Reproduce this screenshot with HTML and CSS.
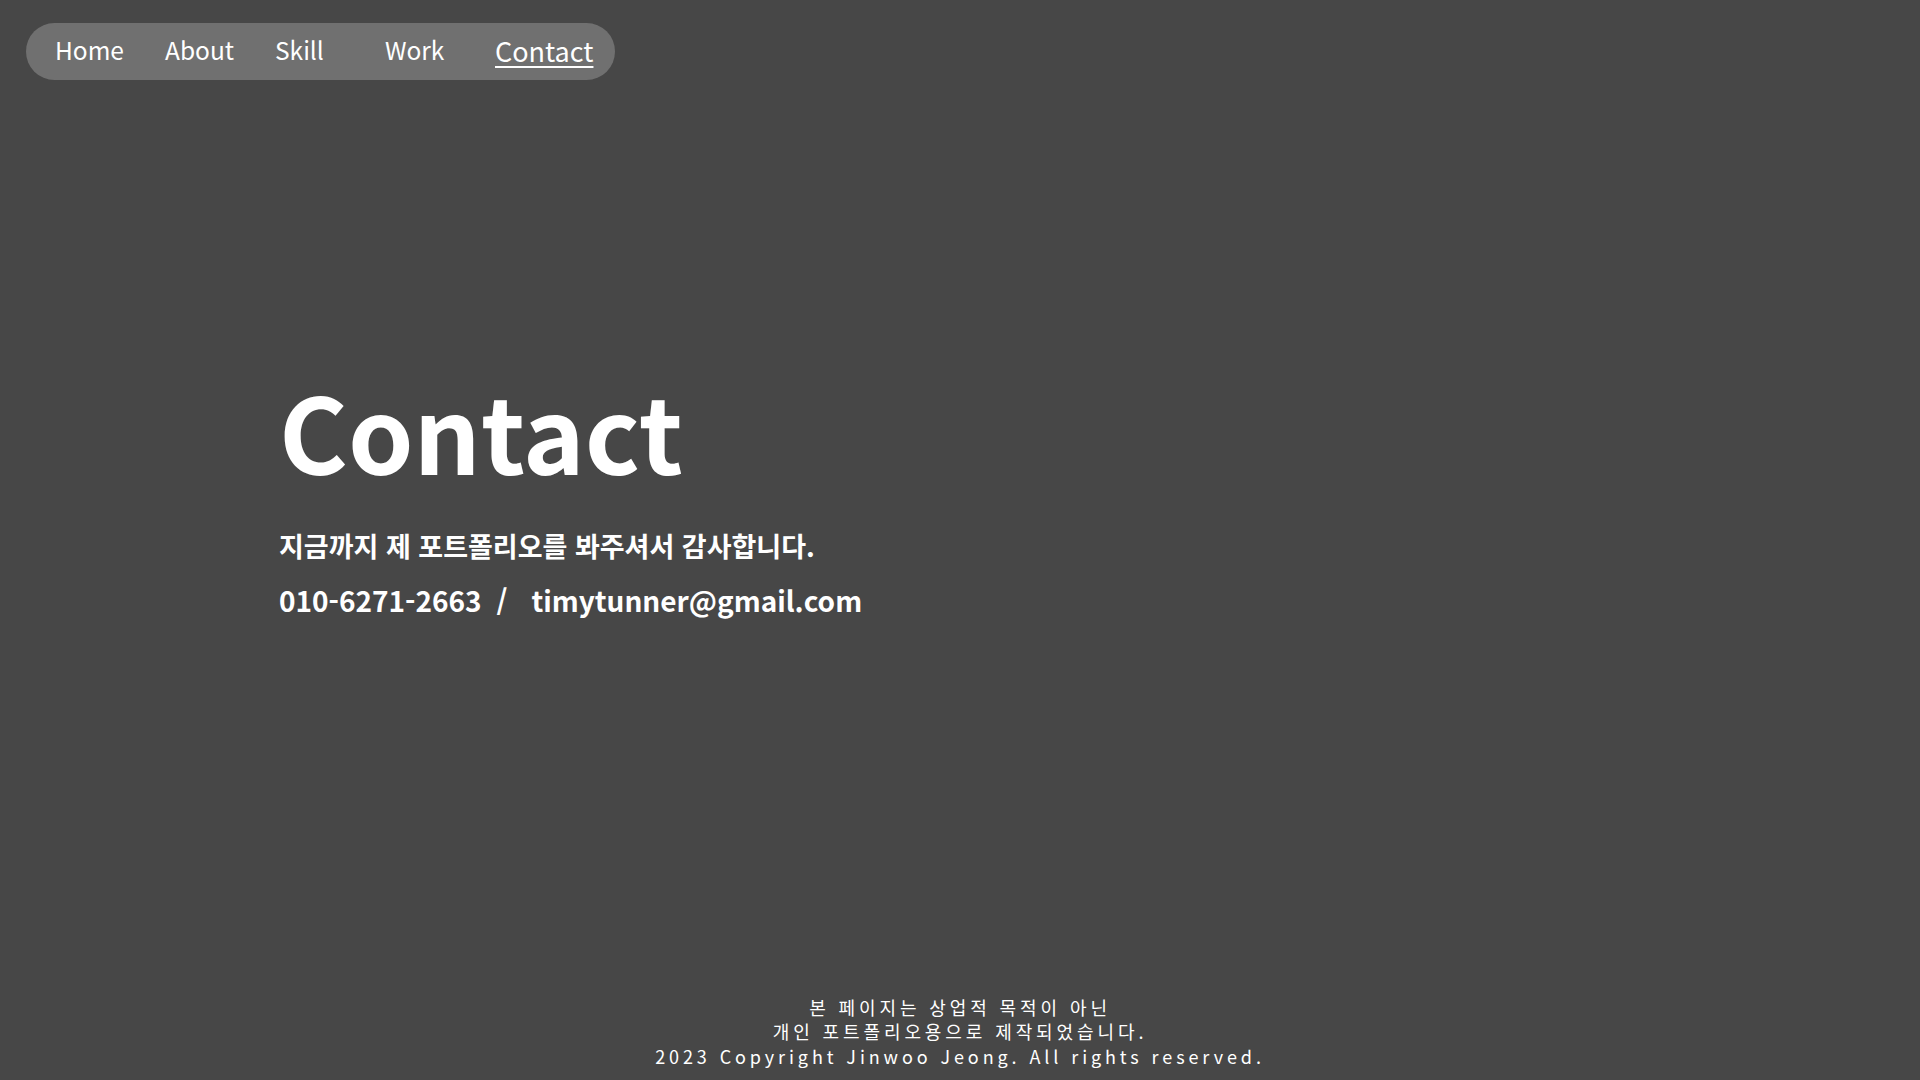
FILE: index.html
```html
<!DOCTYPE html>
<html lang="ko">
<head>
<meta charset="utf-8">
<title>Contact</title>
<link rel="stylesheet" href="styles.css">
</head>
<body>
<div class="page">
  <header class="header">
    <nav class="nav">
      <a class="nav-item" href="#">Home</a>
      <a class="nav-item" href="#">About</a>
      <a class="nav-item" href="#">Skill</a>
      <a class="nav-item" href="#">Work</a>
      <a class="nav-item nav-active" href="#">Contact</a>
    </nav>
  </header>
  <main class="main">
    <h1 class="title">Contact</h1>
    <p class="thanks">지금까지 제 포트폴리오를 봐주셔서 감사합니다.</p>
    <p class="info"><span>010-6271-2663</span><span class="sep">/</span><span>timytunner@gmail.com</span></p>
  </main>
  <footer class="footer">
    <p>본 페이지는 상업적 목적이 아닌</p>
    <p>개인 포트폴리오용으로 제작되었습니다.</p>
    <p>2023 Copyright Jinwoo Jeong. All rights reserved.</p>
  </footer>
</div>
</body>
</html>
```
FILE: styles.css
```css
* { box-sizing: border-box; }
html, body { margin: 0; padding: 0; }
body {
  background: #474747;
  color: #ffffff;
  font-family: "Noto Sans CJK KR", "Noto Sans", sans-serif;
}
.page {
  min-height: 100vh;
  display: flex;
  flex-direction: column;
}
.header {
  padding: 23px 0 0 26px;
}
.nav {
  display: inline-flex;
  align-items: center;
  height: 57px;
  padding: 0 22px 2px 29px;
  background: #707070;
  border-radius: 29px;
}
.nav-item {
  width: 110px;
  color: #ffffff;
  text-decoration: none;
  font-size: 24.5px;
  line-height: 1;
}
.nav-active {
  width: auto;
  font-size: 27px;
  text-decoration: underline;
  text-underline-offset: 4px;
  text-decoration-thickness: 2px;
}
.main {
  flex: 1;
  padding: 297px 0 0 279px;
}
.title {
  margin: 0;
  font-size: 105px;
  font-weight: 700;
  line-height: 1;
}
.thanks {
  margin: 48px 0 0;
  font-size: 27px;
  font-weight: 700;
  line-height: 1.2;
}
.info {
  margin: 22px 0 0;
  font-size: 28px;
  font-weight: 700;
  line-height: 1.2;
}
.sep {
  margin: 0 24px 0 15px;
}
.footer {
  text-align: center;
  padding-bottom: 12px;
}
.footer p {
  margin: 0;
  font-size: 18px;
  line-height: 24.5px;
  letter-spacing: 3.9px;
}
```
